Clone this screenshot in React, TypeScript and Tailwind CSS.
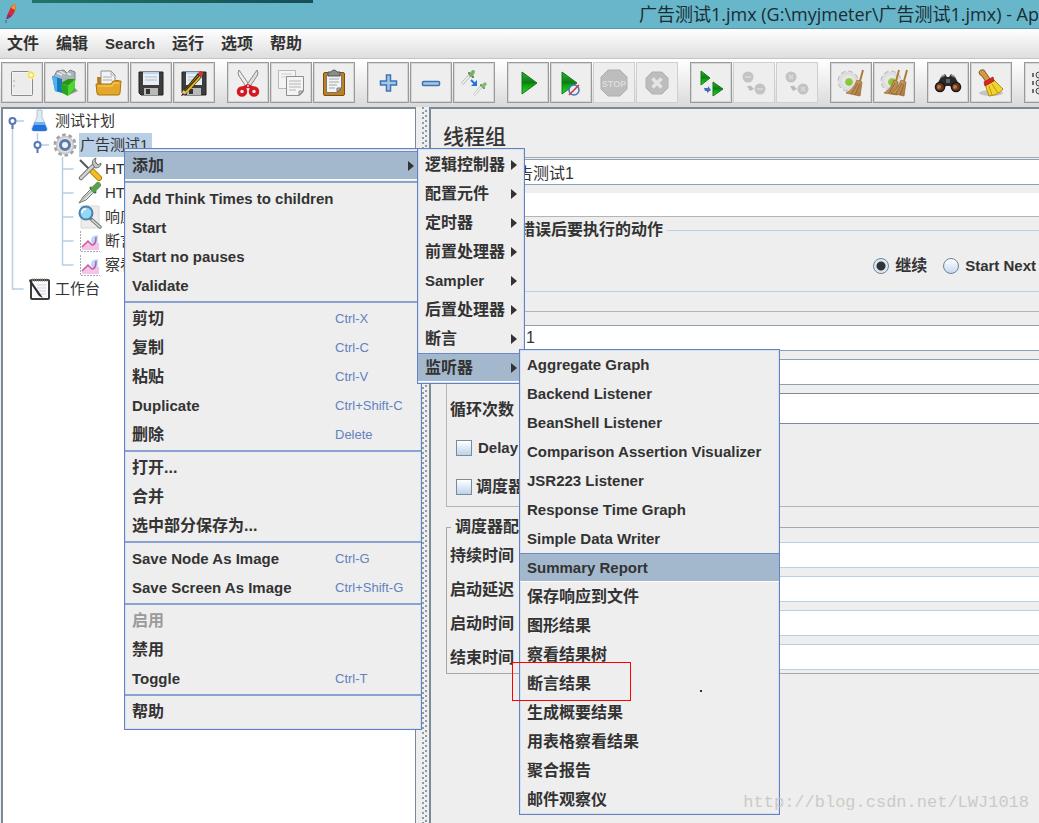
import type { ReactNode } from "react";
import clsx from "clsx";

type MenuEntry = {
  label: string;
  shortcut?: string;
  submenu?: boolean;
  active?: boolean;
  disabled?: boolean;
};

type Guide = "none" | "pipe" | "tee" | "elbow" | "rootHandle" | "childHandle";

const MENU_BAR = ["文件", "编辑", "Search", "运行", "选项", "帮助"];

const CONTEXT_MENU: MenuEntry[][] = [
  [{ label: "添加", submenu: true, active: true }],
  [
    { label: "Add Think Times to children" },
    { label: "Start" },
    { label: "Start no pauses" },
    { label: "Validate" },
  ],
  [
    { label: "剪切", shortcut: "Ctrl-X" },
    { label: "复制", shortcut: "Ctrl-C" },
    { label: "粘贴", shortcut: "Ctrl-V" },
    { label: "Duplicate", shortcut: "Ctrl+Shift-C" },
    { label: "删除", shortcut: "Delete" },
  ],
  [{ label: "打开..." }, { label: "合并" }, { label: "选中部分保存为..." }],
  [
    { label: "Save Node As Image", shortcut: "Ctrl-G" },
    { label: "Save Screen As Image", shortcut: "Ctrl+Shift-G" },
  ],
  [
    { label: "启用", disabled: true },
    { label: "禁用" },
    { label: "Toggle", shortcut: "Ctrl-T" },
  ],
  [{ label: "帮助" }],
];

const ADD_MENU: MenuEntry[] = [
  { label: "逻辑控制器", submenu: true },
  { label: "配置元件", submenu: true },
  { label: "定时器", submenu: true },
  { label: "前置处理器", submenu: true },
  { label: "Sampler", submenu: true },
  { label: "后置处理器", submenu: true },
  { label: "断言", submenu: true },
  { label: "监听器", submenu: true, active: true },
];

const LISTENER_MENU: MenuEntry[] = [
  { label: "Aggregate Graph" },
  { label: "Backend Listener" },
  { label: "BeanShell Listener" },
  { label: "Comparison Assertion Visualizer" },
  { label: "JSR223 Listener" },
  { label: "Response Time Graph" },
  { label: "Simple Data Writer" },
  { label: "Summary Report", active: true },
  { label: "保存响应到文件" },
  { label: "图形结果" },
  { label: "察看结果树" },
  { label: "断言结果" },
  { label: "生成概要结果" },
  { label: "用表格察看结果" },
  { label: "聚合报告" },
  { label: "邮件观察仪" },
];

// Latin labels are set one pixel smaller than the Chinese ones
const textSize = (label: string) =>
  /^[\x20-\x7e]+$/.test(label) ? "text-[15px]" : "text-[16px]";

/* ---------- toolbar icons ---------- */

function Icon({ children }: { children: ReactNode }) {
  return (
    <svg viewBox="0 0 28 28" className="h-7 w-7" aria-hidden="true">
      {children}
    </svg>
  );
}

const NewIcon = () => (
  <Icon>
    <rect x="3.5" y="2.5" width="21" height="24" rx="1" fill="#f4f4f4" stroke="#8b8b8b" />
    <path d="M5 4h18v21H5z" fill="#ececec" />
    <path d="M6 11v2M6 16v2" stroke="#aaa" />
    <circle cx="23" cy="6" r="4.5" fill="#fbf3a0" opacity=".8" />
    <circle cx="23" cy="6" r="2.4" fill="#fffef0" stroke="#ecd94c" strokeWidth="1.2" />
  </Icon>
);

const TemplatesIcon = () => (
  <Icon>
    <path d="M3 7l3-5 7-1 3 3 3-3 5 2v9L12 15 3 11z" fill="#aab4ba" stroke="#78858c" />
    <path d="M6 4l5 2M9 2l5 3M16 4l4 2" stroke="#e7ecee" strokeWidth="1.4" />
    <path d="M1 7l10 3v14L4 22z" fill="#1678c4" />
    <path d="M1 7l5 2v14l-2-1z" fill="#49b4f0" />
    <path d="M10 14l7 3v10l-6-3z" fill="#2ba51e" />
    <path d="M17 17l7-7v11l-7 6z" fill="#4fd62f" />
    <path d="M10 14l7-4 7 0-7 7z" fill="#269818" />
    <path d="M24 19l3 3-9 4z" fill="#5c665c" opacity=".6" />
  </Icon>
);

const OpenIcon = () => (
  <Icon>
    <path d="M3 8h8l2 3h12v14H4z" fill="#bb7d13" />
    <path d="M7 2h10l4 4v11H7z" fill="#f3f3f3" stroke="#8f8f8f" />
    <path d="M17 2v4h4M9 8h9M9 11h9" fill="none" stroke="#aaa" />
    <path d="M2 15h15l2-3h8l-1 12q0 2-2 2H5q-2 0-2-2z" fill="#e4a72a" stroke="#ad710d" />
    <path d="M4 17h14l2-3h5" stroke="#f7d06e" fill="none" />
  </Icon>
);

const Floppy = () => (
  <>
    <path d="M2 3h24v23H4l-2-2z" fill="#3d3d3d" stroke="#222" />
    <path d="M6 3h16v13H6z" fill="#e8eef5" />
    <path d="M6 3h16v2H6z" fill="#b7d6ef" />
    <path d="M8 8h12M8 11h12" stroke="#b3bdc8" />
    <path d="M7 19h14v7H7z" fill="#b9b9b9" />
    <path d="M9 20h4v5H9z" fill="#333" />
  </>
);

const SaveIcon = () => (
  <Icon>
    <Floppy />
  </Icon>
);

const SaveAsIcon = () => (
  <Icon>
    <Floppy />
    <path d="M3 22L18 4l4 4L7 24z" fill="#232323" />
    <path d="M4 22L18 6l3 2L7 24z" fill="#f2bd17" />
    <path d="M5 22L19 7" stroke="#463200" strokeWidth="1.5" />
    <path d="M18 4l2-2q3 0 3 3l-2 3z" fill="#d93232" />
    <path d="M3 21l4 3-6 3z" fill="#e4be87" />
    <path d="M1 27l2-3 1 2z" fill="#111" />
  </Icon>
);

const CutIcon = () => (
  <Icon>
    <path d="M5 1q-2 3 0 6l8 12 3-2z" fill="#ededed" stroke="#888" />
    <path d="M23 1q2 3 0 6l-8 12-3-2z" fill="#dedede" stroke="#888" />
    <ellipse cx="8" cy="22.500" rx="3.500" ry="3.500" fill="#eee" stroke="#d5181f" strokeWidth="3.500" />
    <ellipse cx="20" cy="22.500" rx="3.500" ry="3.500" fill="#eee" stroke="#d5181f" strokeWidth="3.500" />
    <path d="M9 19l5-2 5 2" fill="none" stroke="#d5181f" strokeWidth="3.500" />
    <circle cx="14" cy="17" r="1" fill="#f7d0d0" />
  </Icon>
);

const CopyIcon = () => (
  <Icon>
    <path d="M1.5 1.500h17v18h-17z" fill="#f4f4f4" stroke="#b9b9b9" />
    <path d="M4 5h11M4 8h5" stroke="#cfcfcf" />
    <path d="M9.500 7.500h17v15l-4 4h-13z" fill="#f4f4f4" stroke="#8d8d8d" />
    <path d="M12 12h12M12 15h12M12 18h12M12 21h7" stroke="#b4b4b4" />
    <path d="M22 26v-4h4z" fill="#cbcbcb" stroke="#8d8d8d" />
  </Icon>
);

const PasteIcon = () => (
  <Icon>
    <rect x="3.500" y="3.500" width="21" height="23" rx="1.500" fill="#be8023" stroke="#7c4f0b" />
    <path d="M6.500 6.500h15v13l-4 4h-11z" fill="#f4f4f4" stroke="#777" />
    <path d="M9 10h10M9 13h10M9 16h8M9 19h6" stroke="#a5a5a5" />
    <path d="M17 23v-4h4z" fill="#bbb" stroke="#777" />
    <path d="M8 3h3q1-2 3-2t3 2h3v4H8z" fill="#8a8c86" stroke="#555" />
  </Icon>
);

const PlusIcon = () => (
  <Icon>
    <path
      d="M12.500 6h4v6h6v4h-6v6h-4v-6h-6v-4h6z"
      fill="#a9c5e4"
      stroke="#3b74b4"
      strokeWidth="1.500"
    />
  </Icon>
);

const MinusIcon = () => (
  <Icon>
    <rect x="5.500" y="12.500" width="17" height="4" rx="1" fill="#a9c5e4" stroke="#3b74b4" strokeWidth="1.500" />
  </Icon>
);

const ToggleIcon = () => (
  <Icon>
    <path d="M2 15l9-10" stroke="#b3bbb3" strokeWidth="3" />
    <path d="M2 15l9-10" stroke="#f3f6f3" strokeWidth="1.400" />
    <path d="M9 4l4 4" stroke="#4c7a40" strokeWidth="2" strokeLinecap="round" />
    <path d="M11 6l2-3" stroke="#78b065" strokeWidth="4" strokeLinecap="round" />
    <path d="M14 26l8-9" stroke="#b3bbb3" strokeWidth="2.600" />
    <path d="M14 26l8-9" stroke="#f3f6f3" strokeWidth="1.200" />
    <path d="M21 16l3 3" stroke="#5d8b50" strokeWidth="2" strokeLinecap="round" />
    <path d="M23 17l2-2" stroke="#86bb74" strokeWidth="3.500" strokeLinecap="round" />
    <path d="M11 11l4 4" stroke="#2474e0" strokeWidth="2" />
    <path d="M17 11v6h-6z" fill="#2474e0" />
  </Icon>
);

const Gradients = () => (
  <svg width="0" height="0" className="absolute" aria-hidden="true">
    <defs>
      <linearGradient id="play" x1="0" y1="0" x2="0" y2="1">
        <stop offset="0" stopColor="#31ac31" />
        <stop offset=".5" stopColor="#0b7a12" />
        <stop offset=".55" stopColor="#0a9a0e" />
        <stop offset="1" stopColor="#2fd52f" />
      </linearGradient>
      <linearGradient id="broom" x1="0" y1="0" x2="1" y2="1">
        <stop offset="0" stopColor="#d8b078" />
        <stop offset="1" stopColor="#a87438" />
      </linearGradient>
    </defs>
  </svg>
);

const StartIcon = () => (
  <Icon>
    <path d="M8 3l15 11L8 25z" fill="url(#play)" stroke="#13791a" />
  </Icon>
);

const StartNoPauseIcon = () => (
  <Icon>
    <path d="M5 3l15 11L5 25z" fill="url(#play)" stroke="#13791a" />
    <circle cx="17" cy="21" r="5" fill="#e8eef8" stroke="#4676b4" strokeWidth="1.500" />
    <path d="M12 26l10-10" stroke="#d8343c" strokeWidth="1.600" />
  </Icon>
);

const StopIcon = () => (
  <Icon>
    <path d="M8 1h12l7 7v12l-7 7H8l-7-7V8z" fill="#bdbdbd" stroke="#aeaeae" />
    <text
      x="14"
      y="18"
      textAnchor="middle"
      fill="#dcdcdc"
      className="font-['Liberation_Sans'] text-[9px] font-bold"
    >
      STOP
    </text>
  </Icon>
);

const ShutdownIcon = () => (
  <Icon>
    <path d="M9 3h10l6 6v10l-6 6H9l-6-6V9z" fill="#bdbdbd" stroke="#b2b2b2" />
    <path d="M9.500 9.500l9 9M18.500 9.500l-9 9" stroke="#e4e4e4" strokeWidth="3.500" />
  </Icon>
);

const RemoteStartIcon = () => (
  <Icon>
    <path d="M4 2l9 7-9 7z" fill="url(#play)" stroke="#13791a" />
    <path d="M16 13l10 7-10 7z" fill="url(#play)" stroke="#13791a" />
    <path d="M7 19h4v-2l3 4-4 3v-2H8z" fill="#3d73b4" />
  </Icon>
);

const RemoteDots = ({ mark }: { mark: string }) => (
  <Icon>
    <circle cx="8" cy="8" r="5.500" fill="#c3c3c3" />
    <circle cx="20" cy="20" r="5.500" fill="#c3c3c3" />
    <path d="M7 17h3v-1l4 4-4 2z" fill="#bbb" />
    <path d={mark} stroke="#d6d6d6" strokeWidth="1.800" />
  </Icon>
);

const RemoteStopIcon = () => <RemoteDots mark="M5 8h6M17 20h6" />;
const RemoteShutdownIcon = () => <RemoteDots mark="M6 6l4 4M10 6l-4 4M18 18l4 4M22 18l-4 4" />;

const GearShape = () => (
  <>
    <circle cx="11" cy="12" r="8" fill="none" stroke="#bdbdbd" strokeWidth="5" strokeDasharray="4 2.280" />
    <circle cx="11" cy="12" r="8" fill="#e6e6e6" stroke="#dddddd" strokeWidth="3" />
    <circle cx="12" cy="13" r="3.500" fill="#86cc2c" stroke="#9bc46a" />
  </>
);

const ClearIcon = () => (
  <Icon>
    <GearShape />
    <path d="M26 1l-3 11" stroke="#b07a3c" strokeWidth="2" />
    <path d="M20 11l5 2-2 14-14-3q8-4 11-13z" fill="url(#broom)" stroke="#94642e" strokeWidth=".7" />
    <path d="M21 14l-7 11M23 15l-5 11" stroke="#7f5424" strokeWidth=".7" />
  </Icon>
);

const ClearAllIcon = () => (
  <Icon>
    <GearShape />
    <path d="M19 1l-3 11M27 1l-3 11" stroke="#b07a3c" strokeWidth="2" />
    <path d="M14 11l4 2-1 13-13-2q7-4 10-13z" fill="url(#broom)" stroke="#94642e" strokeWidth=".7" />
    <path d="M21 11l5 2-2 14-13-3q7-4 10-13z" fill="url(#broom)" stroke="#94642e" strokeWidth=".7" />
    <path d="M15 14l-6 10M22 14l-6 11M24 15l-4 11" stroke="#7f5424" strokeWidth=".7" />
  </Icon>
);

const SearchIcon = () => (
  <Icon>
    <path d="M7 8l4-3 2 3h2l2-3 4 3 6 11-6 3-5-5h-4l-5 5-6-3z" fill="#292929" />
    <path d="M7 8l4-2M17 6l4 2" stroke="#8e8e8e" strokeWidth="1.500" />
    <circle cx="6" cy="18" r="4.500" fill="#6a3a1b" stroke="#161616" strokeWidth="1.500" />
    <circle cx="22" cy="18" r="4.500" fill="#6a3a1b" stroke="#161616" strokeWidth="1.500" />
    <circle cx="5" cy="18" r="2" fill="#c17640" />
    <circle cx="21" cy="18" r="2" fill="#c17640" />
    <path d="M12 10h4v4h-4z" fill="#666" />
  </Icon>
);

const SearchResetIcon = () => (
  <Icon>
    <ellipse cx="14" cy="24" rx="12" ry="3" fill="#999" opacity=".5" />
    <path d="M2 3q1-3 5-2l6 9-4 3-4-6q-3-1-3-4z" fill="#d09a4a" stroke="#8a5a17" />
    <path d="M17 11l9 9q-4 6-14 7L8 15z" fill="#f0d432" stroke="#b08c0b" />
    <path d="M12 17l3 9M15 15l6 9" stroke="#ba960f" />
    <path d="M7 13l9-5 1 4-9 5z" fill="#d82525" stroke="#a51313" strokeWidth=".7" />
  </Icon>
);

const FunctionIcon = () => (
  <Icon>
    {[6, 14, 22].map((y) => (
      <g key={y} fill="none" stroke="#444">
        <path d={`M2 ${y - 2}v4M26 ${y - 2}v4`} strokeWidth="1.500" />
        <circle cx="8" cy={y} r="3" fill="#ddd" />
        <circle cx="16" cy={y} r="3" fill="#999" />
      </g>
    ))}
  </Icon>
);

type Tool = { name: string; icon: () => ReactNode; disabled?: boolean };

const TOOL_GROUPS: Tool[][] = [
  [
    { name: "New", icon: NewIcon },
    { name: "Templates", icon: TemplatesIcon },
    { name: "Open", icon: OpenIcon },
    { name: "Save", icon: SaveIcon },
    { name: "Save as", icon: SaveAsIcon },
  ],
  [
    { name: "Cut", icon: CutIcon },
    { name: "Copy", icon: CopyIcon },
    { name: "Paste", icon: PasteIcon },
  ],
  [
    { name: "Expand all", icon: PlusIcon },
    { name: "Collapse all", icon: MinusIcon },
    { name: "Toggle", icon: ToggleIcon },
  ],
  [
    { name: "Start", icon: StartIcon },
    { name: "Start no pauses", icon: StartNoPauseIcon },
    { name: "Stop", icon: StopIcon, disabled: true },
    { name: "Shutdown", icon: ShutdownIcon, disabled: true },
  ],
  [
    { name: "Remote start", icon: RemoteStartIcon },
    { name: "Remote stop", icon: RemoteStopIcon, disabled: true },
    { name: "Remote shutdown", icon: RemoteShutdownIcon, disabled: true },
  ],
  [
    { name: "Clear", icon: ClearIcon },
    { name: "Clear all", icon: ClearAllIcon },
  ],
  [
    { name: "Search", icon: SearchIcon },
    { name: "Reset search", icon: SearchResetIcon },
  ],
  [{ name: "Function helper", icon: FunctionIcon }],
];

function ToolBar() {
  return (
    <div
      role="toolbar"
      className="flex gap-3 overflow-hidden border-t border-white bg-linear-to-b from-white to-[#dadada] pt-0.5 pb-1 pl-px"
    >
      {TOOL_GROUPS.map((group) => (
        <div key={group[0].name} className="flex shrink-0 gap-px">
          {group.map(({ name, icon: ToolIcon, disabled }) => (
            <button
              key={name}
              type="button"
              aria-label={name}
              disabled={disabled}
              className={clsx(
                "flex h-[41px] w-[42px] items-center justify-center border bg-[#eeeeee]",
                disabled
                  ? "border-[#cfcfcf]"
                  : "border-[#9a9a9a] shadow-[inset_0_0_0_1px_#d6d6d6]",
              )}
            >
              <ToolIcon />
            </button>
          ))}
        </div>
      ))}
    </div>
  );
}

/* ---------- test plan tree ---------- */

function GuideCell({ kind }: { kind: Guide }) {
  return (
    <svg viewBox="0 0 25 24" className="h-6 w-[25px] shrink-0" aria-hidden="true">
      <g fill="none" stroke="#b8cfe5" strokeWidth="1.500">
        {kind === "pipe" && <path d="M9.500 0v24" />}
        {kind === "tee" && <path d="M9.500 0v24M9.500 12h11" />}
        {kind === "elbow" && <path d="M9.500 0v12h11" />}
        {kind === "rootHandle" && <path d="M9.500 12v12M13 12h8" />}
        {kind === "childHandle" && <path d="M9.500 0v12M13 12h8" />}
      </g>
      {(kind === "rootHandle" || kind === "childHandle") && (
        <>
          <path d="M9.500 14v6" stroke="#5577b5" strokeWidth="2" />
          <circle cx="9.500" cy="12" r="3" fill="#fff" stroke="#5577b5" strokeWidth="2" />
        </>
      )}
    </svg>
  );
}

function TreeIcon({ children }: { children: ReactNode }) {
  return (
    <svg viewBox="0 0 24 24" className="h-6 w-6 shrink-0" aria-hidden="true">
      {children}
    </svg>
  );
}

const FlaskIcon = () => (
  <TreeIcon>
    <path d="M9 1h5v7l5 11q1 3-2 3H6q-3 0-2-3L9 8z" fill="#dceaf5" stroke="#b6c6d2" />
    <path d="M7 13h9l3 7q0 2-2 2H6q-2 0-2-2z" fill="#2272dc" />
    <path d="M7 13h9l1 3H6z" fill="#6cb1f4" />
  </TreeIcon>
);

const GearIcon = () => (
  <TreeIcon>
    <circle cx="12" cy="12" r="9.500" fill="none" stroke="#a2a2a2" strokeWidth="4" strokeDasharray="3.400 2.570" />
    <circle cx="12" cy="12" r="8.500" fill="#e2e2e2" stroke="#c4c4c4" strokeWidth="1.500" />
    <circle cx="12" cy="12" r="4.500" fill="#eef4fb" stroke="#5a7cab" strokeWidth="3" />
  </TreeIcon>
);

const ToolsIcon = () => (
  <TreeIcon>
    <path d="M2 3l12 12" stroke="#555" strokeWidth="2" />
    <path d="M14 14l7 7" stroke="#b67907" strokeWidth="6" strokeLinecap="round" />
    <path d="M14 14l7 7" stroke="#f5be20" strokeWidth="4" strokeLinecap="round" />
    <path d="M3 21L17 7" stroke="#6c6c6c" strokeWidth="4.500" strokeLinecap="round" />
    <path d="M3 21L17 7" stroke="#d2d2d2" strokeWidth="2.500" strokeLinecap="round" />
    <path d="M15 8q-2-5 3-7l-1 4 3 3 3-2q0 5-6 5z" fill="#c5c5c5" stroke="#6d6d6d" />
  </TreeIcon>
);

const DropperIcon = () => (
  <TreeIcon>
    <path d="M1 22l4-6 9-9 3 3L8 19z" fill="#dfe8df" stroke="#6b756b" />
    <path d="M3 20l4-4 7-6" stroke="#aab5aa" strokeWidth="1.500" fill="none" />
    <path d="M13 7l4 4" stroke="#3a7236" strokeWidth="3" strokeLinecap="round" />
    <path d="M16 8l4-4" stroke="#58a04e" strokeWidth="6" strokeLinecap="round" />
  </TreeIcon>
);

const MagnifierIcon = () => (
  <TreeIcon>
    <path d="M3 1h18v22H3z" fill="#ececec" stroke="#d8d8d8" />
    <path d="M13 14l9 8" stroke="#777" strokeWidth="3.500" strokeLinecap="round" />
    <path d="M14 15l8 7" stroke="#ddd" strokeWidth="1.500" strokeLinecap="round" />
    <circle cx="8" cy="8" r="6.500" fill="#93d7f7" stroke="#4a82a8" strokeWidth="2" />
    <path d="M4 8q0-4 4-4" fill="none" stroke="#e5f7ff" strokeWidth="2" />
  </TreeIcon>
);

const ChartIcon = () => (
  <TreeIcon>
    <path d="M2.500 2v20.500H22" fill="none" stroke="#aaa" strokeDasharray="2 1" />
    <path d="M13 12q0-6 7-6-1 5 0 10h-5z" fill="#b5d8f8" />
    <path d="M4 21v-3l6-6 4 4 7-2v7z" fill="#f4c4ea" />
    <path d="M4 18l6-6 4 4q4 0 4-8" fill="none" stroke="#c9579c" strokeWidth="1.500" />
  </TreeIcon>
);

const WorkbenchIcon = () => (
  <TreeIcon>
    <rect x="3" y="3" width="18" height="19" rx="1" fill="#fafafa" stroke="#3c3c3c" strokeWidth="2" />
    <path d="M9 8h9M9 11h9M9 14h9M9 17h9" stroke="#ccd3e2" />
    <path d="M4 3h15" stroke="#777" strokeWidth="3" strokeDasharray="1 1" />
    <path d="M2 2l11 16 2 3-4-2L1 4z" fill="#2d2d2d" />
  </TreeIcon>
);

type TreeNode = { label: string; guides: Guide[]; icon: () => ReactNode; selected?: boolean };

const TREE: TreeNode[] = [
  { label: "测试计划", guides: ["rootHandle"], icon: FlaskIcon },
  { label: "广告测试1", guides: ["pipe", "childHandle"], icon: GearIcon, selected: true },
  { label: "HT", guides: ["pipe", "none", "tee"], icon: ToolsIcon },
  { label: "HT", guides: ["pipe", "none", "tee"], icon: DropperIcon },
  { label: "响应", guides: ["pipe", "none", "tee"], icon: MagnifierIcon },
  { label: "断言", guides: ["pipe", "none", "tee"], icon: ChartIcon },
  { label: "察看", guides: ["pipe", "none", "elbow"], icon: ChartIcon },
  { label: "工作台", guides: ["elbow"], icon: WorkbenchIcon },
];

function TestTree() {
  return (
    <div className="ml-px w-[415px] shrink-0 border-2 border-r border-b-0 border-[#7a8a99] bg-white">
      <ul role="tree">
        {TREE.map(({ label, guides, icon: NodeIcon, selected }, row) => (
          <li key={row} role="treeitem" aria-selected={!!selected} className="flex h-6 items-center">
            {guides.map((kind, i) => (
              <GuideCell key={i} kind={kind} />
            ))}
            <NodeIcon />
            <span
              className={clsx(
                "ml-0.5 px-px text-[15px] leading-6",
                selected && "bg-[#b8cfe5] pr-1",
              )}
            >
              {label}
            </span>
          </li>
        ))}
      </ul>
    </div>
  );
}

/* ---------- thread group form ---------- */

type FieldProps = {
  id: string;
  label?: string;
  name?: string;
  value?: string;
  labelClass?: string;
  inputClass: string;
};

function Field({ id, label, name, value = "", labelClass = "w-[74px]", inputClass }: FieldProps) {
  return (
    <div className="flex items-center">
      <label htmlFor={id} className={clsx("shrink-0 pt-0.5 leading-5 font-bold", labelClass)}>
        {label}
      </label>
      <input
        id={id}
        type="text"
        aria-label={name}
        defaultValue={value}
        className={clsx("min-w-0 flex-1 bg-white px-0.5", inputClass)}
      />
    </div>
  );
}

const FIELD = "h-[26px] border-y border-[#8fa0b0]";
const FIELD_OFF = "h-[26px] border-y border-[#b8cfe5]";
const CHECKBOX =
  "h-4 w-4 appearance-none border border-[#7a8a99] bg-linear-to-b from-white to-[#bcd3ea]";

function ThreadGroupPanel() {
  return (
    <main className="min-w-0 flex-1 overflow-hidden border-t-2 border-l-2 border-[#7a8a99] bg-[#eeeeee]">
      <h1 className="pt-3.5 pb-1.5 pl-3 text-[21px] leading-7 font-medium">线程组</h1>
      <div className="-mr-2 border-t border-[#a8a8a8] pt-px pl-[15px]">
        <div className="flex flex-col gap-2">
          <Field id="name" name="名称" value="广告测试1" labelClass="w-[53px]" inputClass={FIELD} />
          <Field
            id="comments"
            name="注释"
            labelClass="w-[53px]"
            inputClass="h-6 border-b border-[#b4b4b4]"
          />
        </div>

        <fieldset className="mt-[3px] h-[72px] border border-[#b8cfe5]">
          <legend className="ml-1 px-1 leading-5 font-bold">在取样器错误后要执行的动作</legend>
          <div className="flex h-[52px] items-center justify-end gap-4 pr-[10px] font-bold">
            <label className="flex items-center gap-1.5">
              <input
                type="radio"
                name="on-error"
                defaultChecked
                className="h-4 w-4 appearance-none rounded-full border border-[#6d8399] bg-[radial-gradient(circle,#333_0_4px,#dbe8f5_5px)]"
              />
              继续
            </label>
            <label className="flex items-center gap-1.5 text-[15px]">
              <input
                type="radio"
                name="on-error"
                className="h-4 w-4 appearance-none rounded-full border border-[#6d8399] bg-linear-to-b from-white to-[#c4d9ee]"
              />
              Start Next
            </label>
          </div>
        </fieldset>

        <fieldset aria-label="线程属性" className="mt-[9px] border border-[#b4b4b4] pb-[9px] pl-[3px]">
          <legend className="ml-1 h-5 w-16" />
          <div className="flex flex-col gap-2 pt-1">
            <Field id="threads" name="线程数" value="1" inputClass={FIELD} />
            <Field id="ramp-up" name="Ramp-Up" inputClass={FIELD} />
            <Field id="loops" label="循环次数" inputClass="h-[31px] border-y border-[#7a8a99]" />
          </div>
          <label className="mt-3.5 flex h-5 items-center gap-1.5 pl-1.5 text-[15px] font-bold">
            <input type="checkbox" className={CHECKBOX} />
            Delay
          </label>
          <label className="mt-[19px] flex h-5 items-center gap-1 pl-1.5 font-bold">
            <input type="checkbox" className={CHECKBOX} />
            调度器
          </label>
        </fieldset>

        <fieldset className="mt-2.5 border border-[#a8a8a8] pb-[3px] pl-[3px]">
          <legend className="ml-px px-1 leading-5 font-bold">调度器配置</legend>
          <div className="flex flex-col gap-2 pt-[5px]">
            <Field id="duration" label="持续时间" inputClass={FIELD_OFF} />
            <Field id="delay" label="启动延迟" inputClass={FIELD_OFF} />
            <Field id="start" label="启动时间" inputClass={FIELD_OFF} />
            <Field id="end" label="结束时间" inputClass={FIELD_OFF} />
          </div>
        </fieldset>
      </div>
    </main>
  );
}

/* ---------- popup menus ---------- */

function MenuItem({ label, shortcut, submenu, active, disabled }: MenuEntry) {
  return (
    <button
      type="button"
      role="menuitem"
      disabled={disabled}
      className={clsx(
        "flex h-[29px] w-full items-center border-y pr-[7px] pl-[7px] text-left font-bold whitespace-nowrap",
        textSize(label),
        active ? "border-t-[#7089c4] border-b-white bg-[#a3b8cc]" : "border-transparent",
        disabled && "text-[#9a9a9a]",
      )}
    >
      <span className="flex-1">{label}</span>
      {shortcut && (
        <span className="w-[79px] text-[13px] font-normal text-[#6382bf]">{shortcut}</span>
      )}
      {submenu && (
        <svg viewBox="0 0 6 10" className="h-2.5 w-1.5" aria-hidden="true">
          <path d="M0 0l6 5-6 5z" fill="#333" />
        </svg>
      )}
    </button>
  );
}

function Popup({ className, children }: { className: string; children: ReactNode }) {
  return (
    <div
      role="menu"
      className={clsx(
        "absolute border border-[#6382bf] bg-[#eeeeee] shadow-[inset_0_0_0_1px_#d5e0f0]",
        className,
      )}
    >
      {children}
    </div>
  );
}

export default function App() {
  return (
    <div className="relative flex h-screen flex-col overflow-hidden bg-[#eeeeee] font-['Liberation_Sans','Noto_Sans_CJK_SC',sans-serif] text-[16px] leading-5 text-[#333333]">
      <Gradients />

      <header className="flex h-[29px] items-center overflow-hidden border-b border-[#5798aa] bg-[#67b6ca]">
        <svg viewBox="0 0 20 28" className="h-7 w-5 shrink-0" aria-hidden="true">
          <path d="M16 4q-5 1-6 5l-3 7 3 2q6-5 6-14z" fill="#d5293b" />
          <path d="M16 4q-4 1-5 4l4 2z" fill="#f29a22" />
          <path d="M8 14l-2 5 2 0 3-3z" fill="#803080" />
          <path d="M6 20v3" stroke="#62459a" />
        </svg>
        <div className="ml-3 h-[3px] w-[281px] shrink-0 self-start bg-linear-to-r from-[#217567] to-[#174f57]" />
        <span className="ml-auto shrink-0 font-['Open_Sans','Noto_Sans_CJK_SC',sans-serif] text-[18px] whitespace-nowrap text-[#1c2c33]">
          广告测试1.jmx (G:\myjmeter\广告测试1.jmx) - Ap
        </span>
      </header>

      <nav className="flex h-[30px] items-center gap-[17px] border-b border-[#c4c4c4] bg-linear-to-b from-white to-[#dedede] pl-[7px]">
        {MENU_BAR.map((label) => (
          <button key={label} type="button" className={clsx("font-bold", textSize(label))}>
            {label}
          </button>
        ))}
      </nav>

      <ToolBar />

      <div className="flex min-h-0 flex-1">
        <TestTree />
        <div className="flex w-[13px] shrink-0 justify-center pl-1">
          <div className="w-[5px] bg-[radial-gradient(circle_at_1px_1px,#8f9aa6_1px,transparent_1px),radial-gradient(circle_at_4px_4px,#8f9aa6_1px,transparent_1px)] bg-size-[5px_5px]" />
        </div>
        <ThreadGroupPanel />
      </div>

      <Popup className="top-[148px] left-[124px] w-[298px] pt-0.5 pb-[3px]">
        {CONTEXT_MENU.map((section, i) => (
          <div key={i}>
            {i > 0 && <hr className="mt-px mb-px h-0.5 border-0 bg-[#8aa2d2]" />}
            {section.map((entry) => (
              <MenuItem key={entry.label} {...entry} />
            ))}
          </div>
        ))}
      </Popup>

      <Popup className="top-[148px] left-[417px] w-[108px] py-px">
        {ADD_MENU.map((entry) => (
          <MenuItem key={entry.label} {...entry} />
        ))}
      </Popup>

      <Popup className="top-[349px] left-[519px] w-[261px]">
        {LISTENER_MENU.map((entry) => (
          <MenuItem key={entry.label} {...entry} />
        ))}
      </Popup>

      {/* highlight frame around the assertion results entry */}
      <div className="pointer-events-none absolute top-[662px] left-[512px] h-[39px] w-[119px] border border-[#ff0000]" />
      <div className="absolute top-[690px] left-[700px] h-0.5 w-0.5 bg-[#333333]" />

      <p className="pointer-events-none absolute right-[10px] bottom-2 font-['Liberation_Mono',monospace] text-[17px] leading-6 text-[#cbcbc5]">
        http://blog.csdn.net/LWJ1018
      </p>
    </div>
  );
}
